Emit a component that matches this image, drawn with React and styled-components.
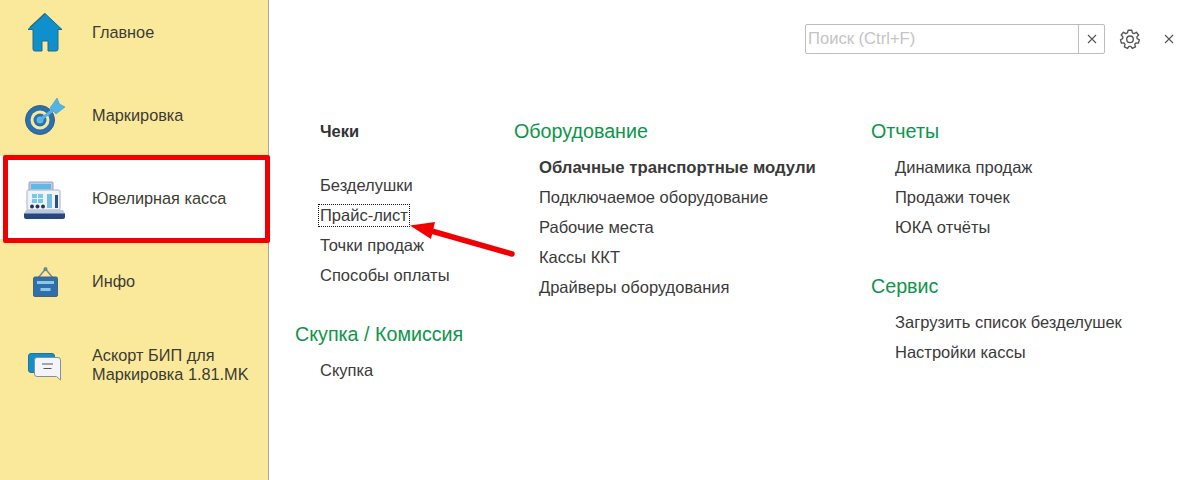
import React from 'react';
import styled, { createGlobalStyle } from 'styled-components';

const GlobalStyle = createGlobalStyle`
  html, body {
    margin: 0;
    padding: 0;
    background: #fff;
  }
  body {
    font-family: "Liberation Sans", Arial, sans-serif;
    overflow: hidden;
  }
`;

const Page = styled.div`
  position: relative;
  display: flex;
  width: 1192px;
  height: 480px;
  overflow: hidden;
`;

const Sidebar = styled.nav`
  flex: 0 0 268px;
  height: 480px;
  background: #fbe99b;
  border-right: 1px solid #a9a69a;
`;

const SideList = styled.div`
  margin-top: -10px;
`;

const SideItem = styled.div`
  display: flex;
  align-items: center;
  height: 83px;
  background: ${props => (props.$active ? '#fff' : 'transparent')};
`;

const SideIcon = styled.div`
  flex: 0 0 92px;
  display: flex;
  justify-content: center;
  padding-right: 2px;
  box-sizing: border-box;
`;

const SideLabel = styled.div`
  padding-top: 2px;
  font-size: 16.3px;
  line-height: 19px;
  color: #3c3c34;
`;

const Highlight = styled.div`
  position: absolute;
  left: 3px;
  top: 155px;
  width: 257px;
  height: 78px;
  border: 5px solid #f00000;
  border-radius: 2px;
`;

const Main = styled.main`
  flex: 1;
  min-width: 0;
`;

const Toolbar = styled.div`
  display: flex;
  align-items: center;
  justify-content: flex-end;
  height: 30px;
  padding: 24px 18px 0 0;
`;

const SearchBox = styled.div`
  display: flex;
  width: 298px;
  height: 28px;
  border: 1px solid #bdbdbd;
  border-radius: 2px;
`;

const SearchText = styled.div`
  flex: 1;
  padding-left: 2px;
  font-size: 16.6px;
  line-height: 28px;
  color: #c4c4c4;
`;

const SearchClear = styled.div`
  flex: 0 0 25px;
  display: flex;
  align-items: center;
  justify-content: center;
  border-left: 1px solid #bdbdbd;
`;

const GearButton = styled.div`
  display: flex;
  margin-left: 14px;
  width: 22px;
`;

const CloseButton = styled.div`
  display: flex;
  margin-left: 23px;
`;

const Columns = styled.div`
  display: flex;
  padding: 62px 0 0 26px;
`;

const Column = styled.div`
  flex: 0 0 ${props => props.$width}px;
`;

const Group = styled.section`
  margin-bottom: ${props => props.$gap || 0}px;
`;

const GroupTitle = styled.h2`
  margin: 0 0 12px;
  height: 30px;
  font-size: 19.7px;
  font-weight: 400;
  line-height: 30px;
  color: #0e9549;
`;

const SubTitle = styled.h3`
  margin: 0 0 30px 25px;
  height: 30px;
  font-size: 16.5px;
  font-weight: 700;
  line-height: 30px;
  color: #333;
`;

const Links = styled.div`
  display: flex;
  flex-direction: column;
  align-items: flex-start;
  padding-left: ${props => props.$indent || 25}px;
  margin-top: -6px;
`;

const LinkItem = styled.div`
  position: relative;
  height: 30px;
  font-size: ${props => (props.$bold ? 16.7 : 16.5)}px;
  font-weight: ${props => (props.$bold ? 700 : 400)};
  line-height: ${props => (props.$bold ? 31 : 30)}px;
  color: #3a3a3a;
  white-space: nowrap;
`;

const FocusRing = styled.span`
  position: absolute;
  left: -2px;
  right: -2px;
  top: 4px;
  bottom: 3px;
  border: 1px dotted #111;
`;

const ArrowOverlay = styled.svg`
  position: absolute;
  left: 400px;
  top: 215px;
`;

const Cross = () => (
  <svg width="10" height="10" viewBox="0 0 10 10" fill="none" stroke="#555" strokeWidth="1.1">
    <path d="M1 1l8 8M9 1l-8 8" />
  </svg>
);

const Gear = () => (
  <svg width="22" height="22" viewBox="0 0 24 24" fill="none" stroke="#555" strokeWidth="1.5" strokeLinejoin="round">
    <path d="M10 2.5h4l.6 2.8 1.9.8 2.4-1.5 2.5 3-1.9 2.1.3 1.8 2.4 1.3-1 3.7-2.8-.1-1.2 1.5.8 2.7-3.5 1.7-1.6-2.3h-2l-1.6 2.3-3.5-1.7.8-2.7-1.2-1.5-2.8.1-1-3.7 2.4-1.3.3-1.8-1.9-2.1 2.5-3 2.4 1.5 1.9-.8z" />
    <circle cx="12" cy="12.3" r="3.6" />
  </svg>
);

const HomeIcon = () => (
  <svg width="36" height="41" viewBox="0 -1 36 41">
    <path d="M18 1.5L35 17.5h-4V37a2 2 0 0 1-2 2h-8V29h-6v10H8a2 2 0 0 1-2-2V17.5H1z" fill="#0f8fcb" stroke="#1f6b8e" strokeWidth="1" strokeLinejoin="round" />
    <path d="M18 1.5L3 15.5" stroke="#2a6b89" strokeWidth="1.5" fill="none" />
  </svg>
);

const TargetIcon = () => (
  <svg width="40" height="41" viewBox="0 0 40 41">
    <circle cx="15" cy="26" r="14.5" fill="#2a6fae" stroke="#355f86" />
    <circle cx="15" cy="26" r="9.5" fill="#fbe99b" />
    <circle cx="15" cy="26" r="6.5" fill="#2a6fae" />
    <circle cx="15" cy="26" r="3.5" fill="#5cb8e4" />
    <path d="M15 26L28 16" stroke="#5bb2e0" strokeWidth="3" />
    <path d="M25 14L32 4l2.5 6 5.5 3-9 7z" fill="#53b4e6" stroke="#4f93bd" strokeWidth=".6" />
  </svg>
);

const RegisterIcon = () => (
  <svg width="42" height="44" viewBox="0 0 42 44">
    <rect x="5" y="6" width="24" height="10" rx="1" fill="#c6cbe0" stroke="#9aa0bd" />
    <rect x="7" y="8" width="20" height="5" fill="#5ab9e6" />
    <rect x="3" y="14" width="33" height="20" rx="1.5" fill="#eef4fa" stroke="#a8aec8" />
    <rect x="8" y="18" width="5" height="4" fill="#79c7ea" />
    <rect x="14" y="18" width="5" height="4" fill="#79c7ea" />
    <rect x="8" y="23" width="5" height="4" fill="#79c7ea" />
    <rect x="14" y="23" width="5" height="4" fill="#79c7ea" />
    <rect x="23" y="18" width="5" height="14" fill="#78bfe3" />
    <rect x="31" y="19" width="3" height="13" fill="#2d4f8b" />
    <circle cx="8" cy="30.5" r="2" fill="#27345f" />
    <circle cx="13.5" cy="30.5" r="2" fill="#27345f" />
    <circle cx="19" cy="30.5" r="2" fill="#27345f" />
    <path d="M2 34h37l2 4H0z" fill="#b9c8e0" />
    <path d="M0 37.5h41v3.5a2 2 0 0 1-2 2H2a2 2 0 0 1-2-2z" fill="#26487f" />
  </svg>
);

const InfoIcon = () => (
  <svg width="25" height="33" viewBox="0 -3 25 33">
    <path d="M5 11L12.5 2 20 11" fill="none" stroke="#7b8a97" strokeWidth="1.5" />
    <circle cx="12.5" cy="2" r="1.6" fill="#4f9ab8" stroke="#4d6473" strokeWidth=".6" />
    <rect x=".5" y="10" width="24" height="19.5" rx="1.5" fill="#2e6fae" stroke="#46627e" />
    <rect x="4" y="14" width="17" height="3" fill="#8dc7e4" />
    <rect x="7.5" y="21" width="10" height="3" fill="#8dc7e4" />
  </svg>
);

const ChatIcon = () => (
  <svg width="34" height="35" viewBox="0 -7 34 35">
    <rect x=".5" y=".5" width="26" height="19" rx="2.5" fill="#0f8fcb" stroke="#2a6f95" />
    <path d="M9 4.5h21a2.5 2.5 0 0 1 2.5 2.5v20l-4-3.5H9A2.5 2.5 0 0 1 6.5 21V7A2.5 2.5 0 0 1 9 4.5z" fill="#f2f4f8" stroke="#86909a" strokeWidth="1" />
    <path d="M14 11h11M15.5 15.5h8" stroke="#555" strokeWidth="1.2" />
  </svg>
);

const sideItems = [
  { label: ['Главное'], icon: <HomeIcon /> },
  { label: ['Маркировка'], icon: <TargetIcon /> },
  { label: ['Ювелирная касса'], icon: <RegisterIcon />, active: true },
  { label: ['Инфо'], icon: <InfoIcon /> },
  { label: ['Аскорт БИП для', 'Маркировка 1.81.MK'], icon: <ChatIcon /> },
];

const App = () => (
  <Page>
    <GlobalStyle />
    <Sidebar>
      <SideList>
        {sideItems.map(item => (
          <SideItem key={item.label[0]} $active={item.active}>
            <SideIcon>{item.icon}</SideIcon>
            <SideLabel>
              {item.label.map(line => (
                <div key={line}>{line}</div>
              ))}
            </SideLabel>
          </SideItem>
        ))}
      </SideList>
    </Sidebar>
    <Highlight />
    <Main>
      <Toolbar>
        <SearchBox>
          <SearchText>Поиск (Ctrl+F)</SearchText>
          <SearchClear>
            <Cross />
          </SearchClear>
        </SearchBox>
        <GearButton>
          <Gear />
        </GearButton>
        <CloseButton>
          <Cross />
        </CloseButton>
      </Toolbar>
      <Columns>
        <Column $width={219}>
          <Group $gap={29}>
            <SubTitle>Чеки</SubTitle>
            <Links>
              <LinkItem>Безделушки</LinkItem>
              <LinkItem>
                Прайс-лист
                <FocusRing />
              </LinkItem>
              <LinkItem>Точки продаж</LinkItem>
              <LinkItem>Способы оплаты</LinkItem>
            </Links>
          </Group>
          <Group>
            <GroupTitle>Скупка / Комиссия</GroupTitle>
            <Links>
              <LinkItem>Скупка</LinkItem>
            </Links>
          </Group>
        </Column>
        <Column $width={357}>
          <GroupTitle>Оборудование</GroupTitle>
          <Links>
            <LinkItem $bold>Облачные транспортные модули</LinkItem>
            <LinkItem>Подключаемое оборудование</LinkItem>
            <LinkItem>Рабочие места</LinkItem>
            <LinkItem>Кассы ККТ</LinkItem>
            <LinkItem>Драйверы оборудования</LinkItem>
          </Links>
        </Column>
        <Column $width={300}>
          <Group $gap={29}>
            <GroupTitle>Отчеты</GroupTitle>
            <Links $indent={24}>
              <LinkItem>Динамика продаж</LinkItem>
              <LinkItem>Продажи точек</LinkItem>
              <LinkItem>ЮКА отчёты</LinkItem>
            </Links>
          </Group>
          <Group>
            <GroupTitle>Сервис</GroupTitle>
            <Links $indent={24}>
              <LinkItem>Загрузить список безделушек</LinkItem>
              <LinkItem>Настройки кассы</LinkItem>
            </Links>
          </Group>
        </Column>
      </Columns>
    </Main>
    <ArrowOverlay width="120" height="50" viewBox="0 0 120 50">
      <path d="M112 39L28 15" stroke="#f00000" strokeWidth="5.5" strokeLinecap="round" fill="none" />
      <path d="M10 10.5L35 7 31 24z" fill="#f00000" />
    </ArrowOverlay>
  </Page>
);

export default App;
